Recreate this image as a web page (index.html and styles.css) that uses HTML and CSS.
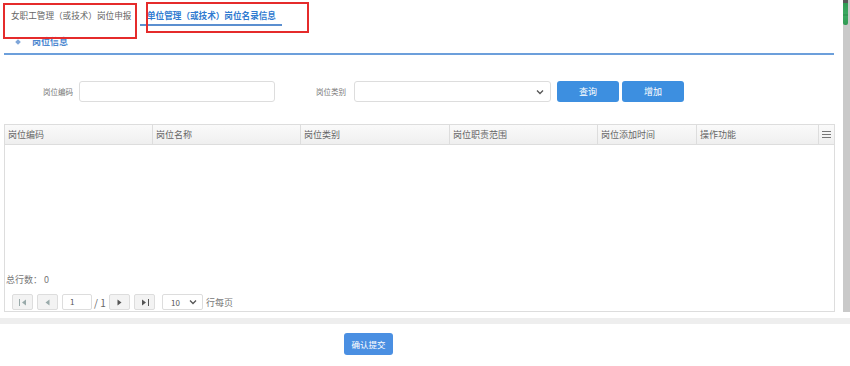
FILE: index.html
```html
<!DOCTYPE html>
<html lang="zh-CN">
<head>
  <meta charset="UTF-8">
  <title>岗位名录信息</title>
  <link rel="stylesheet" href="styles.css">
</head>
<body>

  <!-- Frame with content and scrollbar -->
  <div class="frame">
    <div class="frame-main">

      <!-- Tabs -->
      <div class="tabs">
        <div class="tab">女职工管理（或技术）岗位申报</div>
        <div class="tab active">单位管理（或技术）岗位名录信息</div>
      </div>

      <!-- Section title -->
      <div class="section-title"><span class="diamond"></span>岗位信息</div>

      <!-- Search row -->
      <div class="search-row">
        <label class="field-label">岗位编码</label>
        <input type="text" class="field-input">
        <label class="field-label second">岗位类别</label>
        <div class="field-select">
          <svg width="8" height="6" viewBox="0 0 8 6"><path d="M1 1.5 L4 4.5 L7 1.5" fill="none" stroke="#555" stroke-width="1.3"/></svg>
        </div>
        <button class="btn">查询</button>
        <button class="btn btn-add">增加</button>
      </div>

      <!-- Data grid -->
      <div class="grid">
        <div class="grid-head">
          <div class="cell">岗位编码</div>
          <div class="cell">岗位名称</div>
          <div class="cell">岗位类别</div>
          <div class="cell">岗位职责范围</div>
          <div class="cell">岗位添加时间</div>
          <div class="cell">操作功能</div>
          <div class="cell menu">
            <svg width="9" height="7" viewBox="0 0 9 7"><path d="M0 0.5 H9 M0 3.5 H9 M0 6.5 H9" stroke="#777" stroke-width="1"/></svg>
          </div>
        </div>
        <div class="grid-body"></div>
        <div class="grid-total">总行数：&nbsp;0</div>
        <div class="pager">
          <span class="pg-btn">
            <svg width="8" height="7" viewBox="0 0 8 7"><path d="M0.5 0 V7" stroke="#9aa" stroke-width="1"/><path d="M7 0.5 L3 3.5 L7 6.5 Z" fill="#9aa"/></svg>
          </span>
          <span class="pg-btn">
            <svg width="5" height="7" viewBox="0 0 5 7"><path d="M4.5 0.5 L0.5 3.5 L4.5 6.5 Z" fill="#9aa"/></svg>
          </span>
          <span class="pg-input">1</span>
          <span class="pg-of">/ 1</span>
          <span class="pg-btn">
            <svg width="5" height="7" viewBox="0 0 5 7"><path d="M0.5 0.5 L4.5 3.5 L0.5 6.5 Z" fill="#555"/></svg>
          </span>
          <span class="pg-btn">
            <svg width="8" height="7" viewBox="0 0 8 7"><path d="M1 0.5 L5 3.5 L1 6.5 Z" fill="#555"/><path d="M7.5 0 V7" stroke="#555" stroke-width="1"/></svg>
          </span>
          <span class="pg-size">10
            <svg width="8" height="6" viewBox="0 0 8 6"><path d="M1 1.5 L4 4.5 L7 1.5" fill="none" stroke="#555" stroke-width="1.3"/></svg>
          </span>
          <span class="pg-label">行每页</span>
        </div>
      </div>
    </div>

    <div class="vscroll"><div class="vthumb"></div></div>
  </div>

  <div class="hband"></div>

  <div class="footer">
    <button class="btn-submit">确认提交</button>
  </div>

  <!-- Annotation boxes -->
  <div class="mark mark-one"></div>
  <div class="mark mark-two"></div>

</body>
</html>
```

FILE: styles.css
```css
/* Page */
body {
  margin: 0;
  position: relative;
  font-family: "Noto Sans CJK SC", "Liberation Sans", sans-serif;
  font-size: 9px;
  color: #666;
  background: #fff;
}

/* Frame */
.frame {
  display: flex;
  height: 312px;
}

.frame-main {
  width: 843px;
}

.vscroll {
  width: 7px;
  background: #c9c9c9;
}

.vthumb {
  width: 5px;
  height: 25px;
  background: linear-gradient(#555 0, #555 3px, #2f9a52 3px, #3aa860 14px, #2a8a48 15px, #3aa860 16px, #2f9a52 25px);
  border-radius: 0 0 2px 2px;
}

/* Tabs */
.tabs {
  display: flex;
  height: 32px;
  padding-left: 11px;
}

.tab {
  width: 129px;
  padding-top: 9px;
  line-height: 12px;
  font-size: 8.6px;
  color: #666;
  white-space: nowrap;
}

.tab.active {
  width: auto;
  padding: 9px 6px 3px 7px;
  height: 12px;
  color: #2f7ad0;
  font-weight: bold;
  border-bottom: 2px solid #5b8fd0;
}

/* Section title */
.section-title {
  display: flex;
  align-items: center;
  margin: 0 9px 0 4px;
  padding: 4px 0 5px 12px;
  line-height: 12px;
  font-size: 9px;
  font-weight: bold;
  color: #4a86cf;
  border-bottom: 2px solid #6c9fdb;
}

.diamond {
  width: 4px;
  height: 4px;
  margin-right: 12px;
  background: #7fa6d9;
  transform: rotate(45deg);
}

/* Search row */
.search-row {
  display: flex;
  align-items: center;
  height: 21px;
  margin-top: 26px;
  padding-left: 43px;
}

.field-label {
  width: 30px;
  margin-right: 6px;
  font-size: 7.5px;
  color: #777;
}

.field-label.second {
  margin-left: 41px;
  margin-right: 8px;
}

.field-input {
  box-sizing: border-box;
  width: 196px;
  height: 21px;
  margin: 0;
  border: 1px solid #ddd;
  border-radius: 3px;
  outline: none;
}

.field-select {
  box-sizing: border-box;
  display: flex;
  justify-content: flex-end;
  align-items: center;
  width: 197px;
  height: 21px;
  padding-right: 6px;
  border: 1px solid #ddd;
  border-radius: 3px;
}

.btn {
  width: 62px;
  height: 21px;
  margin-left: 6px;
  padding: 0;
  border: none;
  border-radius: 3px;
  background: #3d8fe0;
  color: #fff;
  font-family: inherit;
  font-size: 9px;
}

.btn-add {
  margin-left: 3px;
}

/* Data grid */
.grid {
  box-sizing: border-box;
  display: flex;
  flex-direction: column;
  width: 831px;
  height: 188px;
  margin: 22px 0 0 4px;
  border: 1px solid #ddd;
}

.grid-head {
  display: grid;
  grid-template-columns: 148px 148px 149px 148px 99px 122px 1fr;
  height: 19px;
  border-bottom: 1px solid #ddd;
  background: linear-gradient(#fafafa, #efefef);
}

.cell {
  display: flex;
  align-items: center;
  padding-left: 3px;
  border-right: 1px solid #ddd;
  color: #666;
  font-size: 9px;
}

.cell.menu {
  justify-content: center;
  padding: 0;
  border-right: none;
}

.grid-body {
  flex: 1;
}

.grid-total {
  line-height: 12px;
  padding-left: 1px;
  color: #777;
  font-size: 9px;
}

/* Pager */
.pager {
  display: flex;
  align-items: center;
  height: 16px;
  margin: 8px 0 1px 7px;
}

.pg-btn {
  box-sizing: border-box;
  display: flex;
  justify-content: center;
  align-items: center;
  width: 21px;
  height: 16px;
  margin-right: 4px;
  border: 1px solid #ddd;
  border-radius: 2px;
  background: #f3f3f3;
}

.pg-input {
  box-sizing: border-box;
  width: 30px;
  height: 16px;
  padding-left: 7px;
  border: 1px solid #ddd;
  border-radius: 2px;
  line-height: 14px;
  font-size: 8px;
  color: #555;
}

.pg-of {
  width: 15px;
  margin-left: 2px;
  font-size: 10px;
  color: #666;
}

.pg-size {
  box-sizing: border-box;
  display: flex;
  justify-content: space-between;
  align-items: center;
  width: 41px;
  height: 16px;
  margin-left: 3px;
  padding: 0 5px 0 8px;
  border: 1px solid #ddd;
  border-radius: 2px;
  font-size: 8px;
  color: #555;
}

.pg-label {
  margin-left: 3px;
  color: #777;
}

/* Bottom */
.hband {
  height: 6px;
  margin-top: 6px;
  background: #eeeeee;
}

.footer {
  padding: 9px 0 0 344px;
}

.btn-submit {
  width: 49px;
  height: 22px;
  padding: 0;
  border: none;
  border-radius: 3px;
  background: #4a8fe2;
  color: #fff;
  font-family: inherit;
  font-size: 8.5px;
}

/* Red annotation frames */
.mark {
  position: absolute;
  box-sizing: border-box;
  border: 2px solid #e52b2b;
}

.mark-one {
  left: 3px;
  top: 3px;
  width: 134px;
  height: 36px;
}

.mark-two {
  left: 146px;
  top: 2px;
  width: 163px;
  height: 31px;
}
```
